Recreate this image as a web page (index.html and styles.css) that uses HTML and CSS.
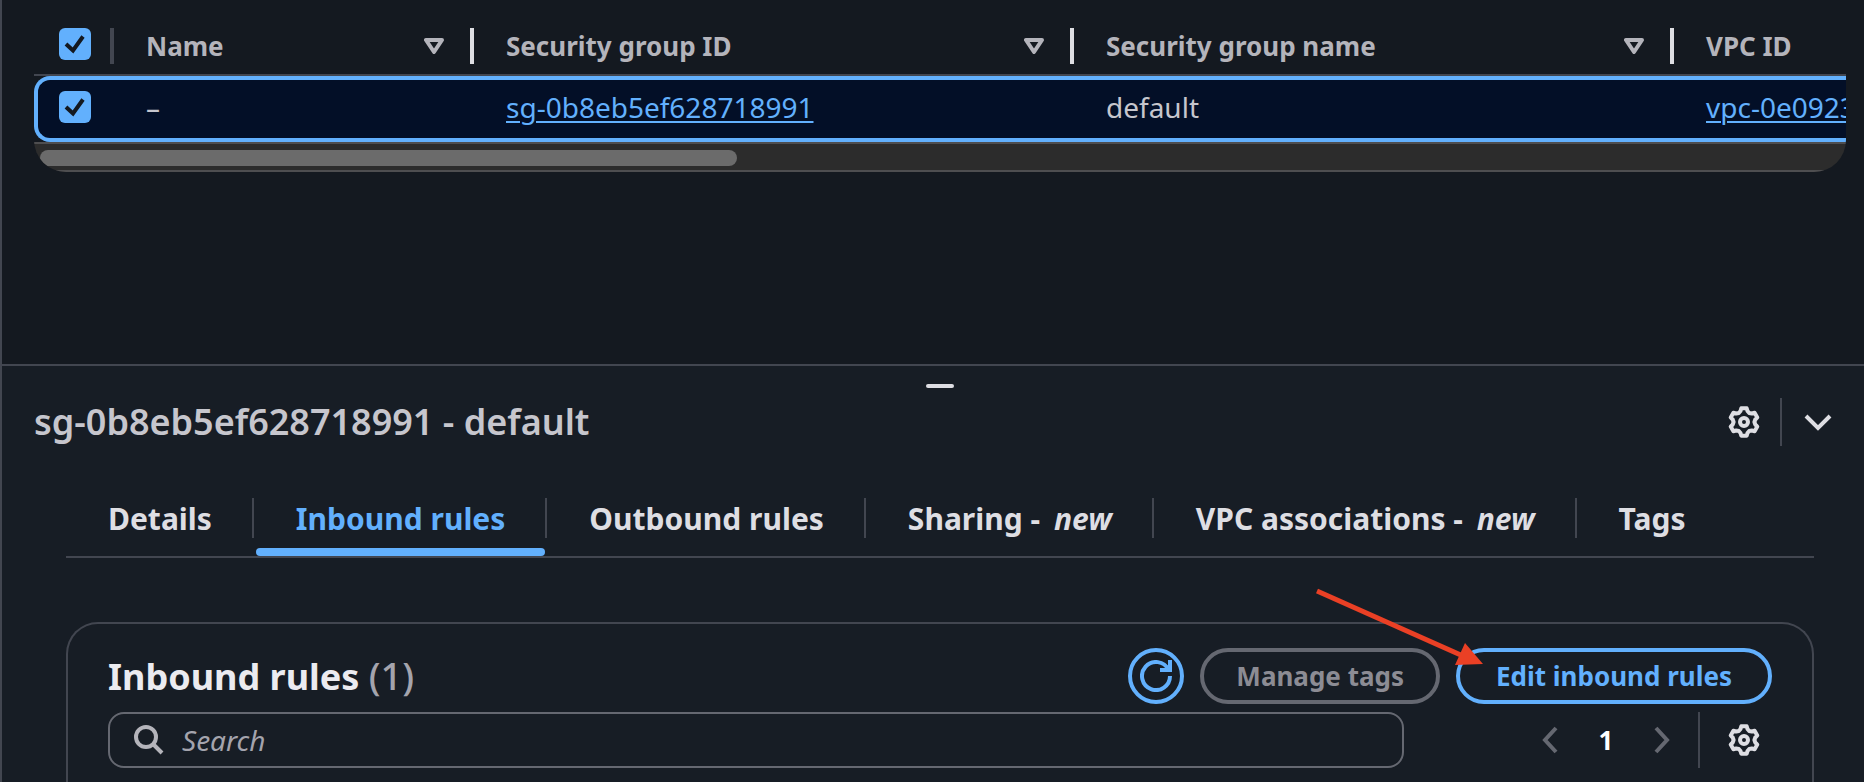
FILE: index.html
```html
<!DOCTYPE html>
<html lang="en">
<head>
<meta charset="utf-8">
<meta name="viewport" content="width=device-width, initial-scale=1">
<title>Security groups</title>
<link rel="stylesheet" href="styles.css">
</head>
<body>
<svg class="sprite" aria-hidden="true">
  <symbol id="gear" viewBox="0 0 32 32">
    <path d="M12.5 5L13.3 2.2H18.7L19.5 5L21.2 7L23.8 7.5L26.6 6.8L29.3 11.4L27.3 13.5L26.4 16L27.3 18.5L29.3 20.6L26.6 25.2L23.8 24.5L21.2 25L19.5 27L18.7 29.8H13.3L12.5 27L10.8 25L8.2 24.5L5.4 25.2L2.7 20.6L4.7 18.5L5.6 16L4.7 13.5L2.7 11.4L5.4 6.8L8.2 7.5L10.8 7Z" stroke-linejoin="round"/>
    <circle cx="16" cy="16" r="4"/>
  </symbol>
  <symbol id="check" viewBox="0 0 32 32"><path d="M7 16L14 22.500L24 8.500"/></symbol>
  <symbol id="sort" viewBox="0 0 20 16"><path d="M2 2H18L10 14Z" stroke-linejoin="round"/></symbol>
</svg>
<div class="page">
  <main class="groups">
    <div class="table-box">
      <div class="table-clip">
        <table class="table">
          <colgroup><col class="col-check"><col class="col-name"><col class="col-wide"><col class="col-wide"><col class="col-wide"></colgroup>
          <thead>
            <tr>
              <th><label class="check"><input type="checkbox" checked aria-label="Select all"><svg><use href="#check"/></svg></label></th>
              <th><div class="head"><span>Name</span><button type="button" aria-label="Sort by name"><svg><use href="#sort"/></svg></button></div></th>
              <th><div class="head"><span>Security group ID</span><button type="button" aria-label="Sort by ID"><svg><use href="#sort"/></svg></button></div></th>
              <th><div class="head"><span>Security group name</span><button type="button" aria-label="Sort by group name"><svg><use href="#sort"/></svg></button></div></th>
              <th><div class="head"><span>VPC ID</span></div></th>
            </tr>
          </thead>
          <tbody>
            <tr>
              <td><label class="check"><input type="checkbox" checked aria-label="Select group"><svg><use href="#check"/></svg></label></td>
              <td>–</td>
              <td><a href="#sg">sg-0b8eb5ef628718991</a></td>
              <td>default</td>
              <td><a href="#vpc">vpc-0e0923</a></td>
            </tr>
          </tbody>
        </table>
      </div>
      <div class="scrollbar"><div class="thumb"></div></div>
    </div>
  </main>

  <section class="panel">
    <div class="handle-row"><div class="handle"></div></div>
    <header class="panel-head">
      <h2>sg-0b8eb5ef628718991 - default</h2>
      <div class="panel-tools">
        <button type="button" class="icon-btn" aria-label="Panel settings"><svg class="icon"><use href="#gear"/></svg></button>
        <span class="rule"></span>
        <button type="button" class="icon-btn" aria-label="Collapse panel"><svg class="icon" viewBox="0 0 32 32"><path d="M4 10L16 22L28 10"/></svg></button>
      </div>
    </header>
    <div class="tabs" role="tablist">
      <button type="button" role="tab">Details</button>
      <button type="button" role="tab" aria-selected="true" class="active">Inbound rules</button>
      <button type="button" role="tab">Outbound rules</button>
      <button type="button" role="tab">Sharing - <i>new</i></button>
      <button type="button" role="tab">VPC associations - <i>new</i></button>
      <button type="button" role="tab">Tags</button>
    </div>
    <div class="card">
      <div class="card-head">
        <h3>Inbound rules <span>(1)</span></h3>
        <div class="actions">
          <button type="button" class="btn round" aria-label="Refresh"><svg class="icon" viewBox="0 0 32 32"><path d="M30 16A14 14 0 1 1 28.500 9.700M30 0V12M32 10H20"/></svg></button>
          <button type="button" class="btn disabled" disabled>Manage tags</button>
          <div class="target">
            <button type="button" class="btn edit">Edit inbound rules</button>
            <svg class="arrow" viewBox="0 0 168 78" aria-hidden="true"><path d="M1 3L147 68" stroke="#ea4025" stroke-width="5"/><path d="M149 55L167 76L139 77Z" fill="#ea4025"/></svg>
          </div>
        </div>
      </div>
      <div class="filter">
        <label class="search">
          <svg viewBox="0 0 30 30"><circle cx="12" cy="12" r="10"/><path d="M19 19L28 28"/></svg>
          <input type="text" placeholder="Search" aria-label="Search">
        </label>
        <nav class="pager" aria-label="Pages">
          <button type="button" class="step" aria-label="Previous page"><svg viewBox="0 0 16 28"><path d="M14 2L3 14L14 26"/></svg></button>
          <button type="button" class="num">1</button>
          <button type="button" class="step" aria-label="Next page"><svg viewBox="0 0 16 28"><path d="M2 2L13 14L2 26"/></svg></button>
          <span class="rule"></span>
          <button type="button" class="icon-btn" aria-label="Table settings"><svg class="icon"><use href="#gear"/></svg></button>
        </nav>
      </div>
    </div>
  </section>
</div>
</body>
</html>
```
FILE: styles.css
```css
* { box-sizing: border-box; }
html, body { margin: 0; height: 100%; }
body {
  background: #141920;
  color: #c6c6cd;
  font: 28px/40px "Noto Sans", "Open Sans", sans-serif;
  overflow: hidden;
}
button {
  margin: 0;
  padding: 0;
  border: 0;
  background: none;
  color: inherit;
  font: inherit;
  cursor: pointer;
}
svg { display: block; fill: none; stroke: currentColor; stroke-width: 4; }
.sprite { position: absolute; width: 0; height: 0; }
h2, h3 { margin: 0; }

.page {
  min-height: 100vh;
  display: flex;
  flex-direction: column;
  border-left: 2px solid #424650;
}

/* Security group list */
.groups { padding: 0 18px 192px 32px; }
.table-box { overflow: hidden; border-radius: 0 0 32px 32px; }
.table-clip { overflow: hidden; }
.table {
  width: 2236px;
  table-layout: fixed;
  border-collapse: separate;
  border-spacing: 0;
  text-align: left;
}
.col-check { width: 76px; }
.col-name { width: 360px; }
.col-wide { width: 600px; }
th {
  height: 76px;
  padding: 28px 0 0;
  border-bottom: 2px solid #424650;
  font-size: 26px;
  font-weight: 700;
  line-height: 36px;
  color: #b4b4bb;
  vertical-align: top;
}
th:first-child { padding-left: 25px; }
.head {
  display: flex;
  justify-content: space-between;
  align-items: center;
  height: 36px;
  padding: 0 26px 0 32px;
  border-left: 4px solid #dedee3;
}
th:nth-child(2) .head { border-color: #424650; }
.head svg { width: 20px; height: 16px; }
td {
  height: 66px;
  padding: 0 0 4px 36px;
  border: solid #62b0fd;
  border-width: 4px 0;
  background: #030f27;
}
td:first-child {
  padding-left: 21px;
  border-left-width: 4px;
  border-radius: 16px 0 0 16px;
}
td a { color: #62b0fd; text-decoration-thickness: 2px; text-underline-offset: 3px; }
.check { display: grid; width: 32px; height: 32px; }
.check input, .check svg { grid-area: 1 / 1; width: 32px; height: 32px; margin: 0; }
.check input { appearance: none; border-radius: 6px; background: #62b0fd; }
.check svg { color: #141920; pointer-events: none; }
.scrollbar {
  height: 30px;
  padding: 6px;
  background: #2c2c2c;
  border: solid #4e4e50;
  border-width: 2px 0;
}
.thumb { width: 38.7%; height: 16px; border-radius: 8px; background: #6b6b6b; }

/* Split panel */
.panel {
  flex: 1;
  padding: 18px 30px 0 32px;
  border-top: 2px solid #424650;
  background: #171d25;
}
.handle-row { display: flex; justify-content: center; padding-left: 12px; }
.handle { width: 28px; height: 4px; border-radius: 2px; background: #dedee3; }
.panel-head { display: flex; justify-content: space-between; align-items: center; margin-top: 10px; height: 48px; }
.panel-head h2 { font-size: 36px; font-weight: 600; line-height: 48px; }
.panel-tools { display: flex; align-items: center; gap: 20px; color: #dedee3; }
.rule { width: 2px; height: 48px; background: #424650; }
.icon { width: 32px; height: 32px; }
.tabs {
  display: flex;
  margin: 52px 20px 0 32px;
  height: 60px;
  border-bottom: 2px solid #424650;
  font-size: 30px;
  font-weight: 700;
  color: #dedee3;
}
.tabs button {
  position: relative;
  height: 58px;
  padding: 0 42px 16px;
  line-height: 40px;
  white-space: nowrap;
}
.tabs i { margin-left: 6px; }
.tabs button:not(:last-child)::before {
  content: "";
  position: absolute;
  right: 0;
  top: 0;
  width: 2px;
  height: 40px;
  background: #424650;
}
.tabs .active { color: #62b0fd; }
.tabs .active::after {
  content: "";
  position: absolute;
  inset: auto 2px 0;
  height: 8px;
  border-radius: 4px;
  background: #62b0fd;
}
.card {
  margin: 64px 20px 0 32px;
  padding: 24px 40px;
  border: 2px solid #424650;
  border-bottom: 0;
  border-radius: 32px 32px 0 0;
}
.card-head { display: flex; justify-content: space-between; align-items: center; height: 56px; }
.card-head h3 { font-size: 36px; font-weight: 700; line-height: 56px; color: #ebebf0; }
.card-head h3 span { font-size: 38px; font-weight: 500; color: #a4a4ad; }
.actions { display: flex; gap: 16px; }
.btn {
  height: 56px;
  padding: 0 32px;
  border: 4px solid #62b0fd;
  border-radius: 28px;
  color: #62b0fd;
  font-size: 26px;
  font-weight: 700;
  line-height: 40px;
  white-space: nowrap;
}
.edit { padding: 0 36px; }
.round { width: 56px; padding: 0 8px; }
.disabled { border-color: #656871; color: #8c8c94; }
.target { position: relative; }
.arrow { position: absolute; left: -140px; top: -60px; width: 168px; height: 78px; stroke: none; pointer-events: none; }
.filter { display: flex; margin-top: 8px; height: 56px; }
.search {
  flex: 1;
  display: flex;
  align-items: center;
  gap: 18px;
  padding: 0 24px;
  border: 2px solid #656871;
  border-radius: 16px;
}
.search svg { flex: none; width: 30px; height: 30px; color: #b4b4bb; }
.search input {
  flex: 1;
  min-width: 0;
  padding: 0;
  border: 0;
  outline: 0;
  background: none;
  color: #dedee3;
  font: inherit;
}
.search input::placeholder { color: #a4a4ad; font-style: italic; opacity: 1; }
.pager { display: flex; align-items: center; margin-left: 138px; }
.step svg { width: 16px; height: 28px; color: #656871; }
.num { width: 96px; font-size: 26px; font-weight: 700; color: #fff; }
.pager .rule { height: 56px; margin: 0 28px; }
.pager .icon-btn { margin-right: 12px; color: #dedee3; }
```
